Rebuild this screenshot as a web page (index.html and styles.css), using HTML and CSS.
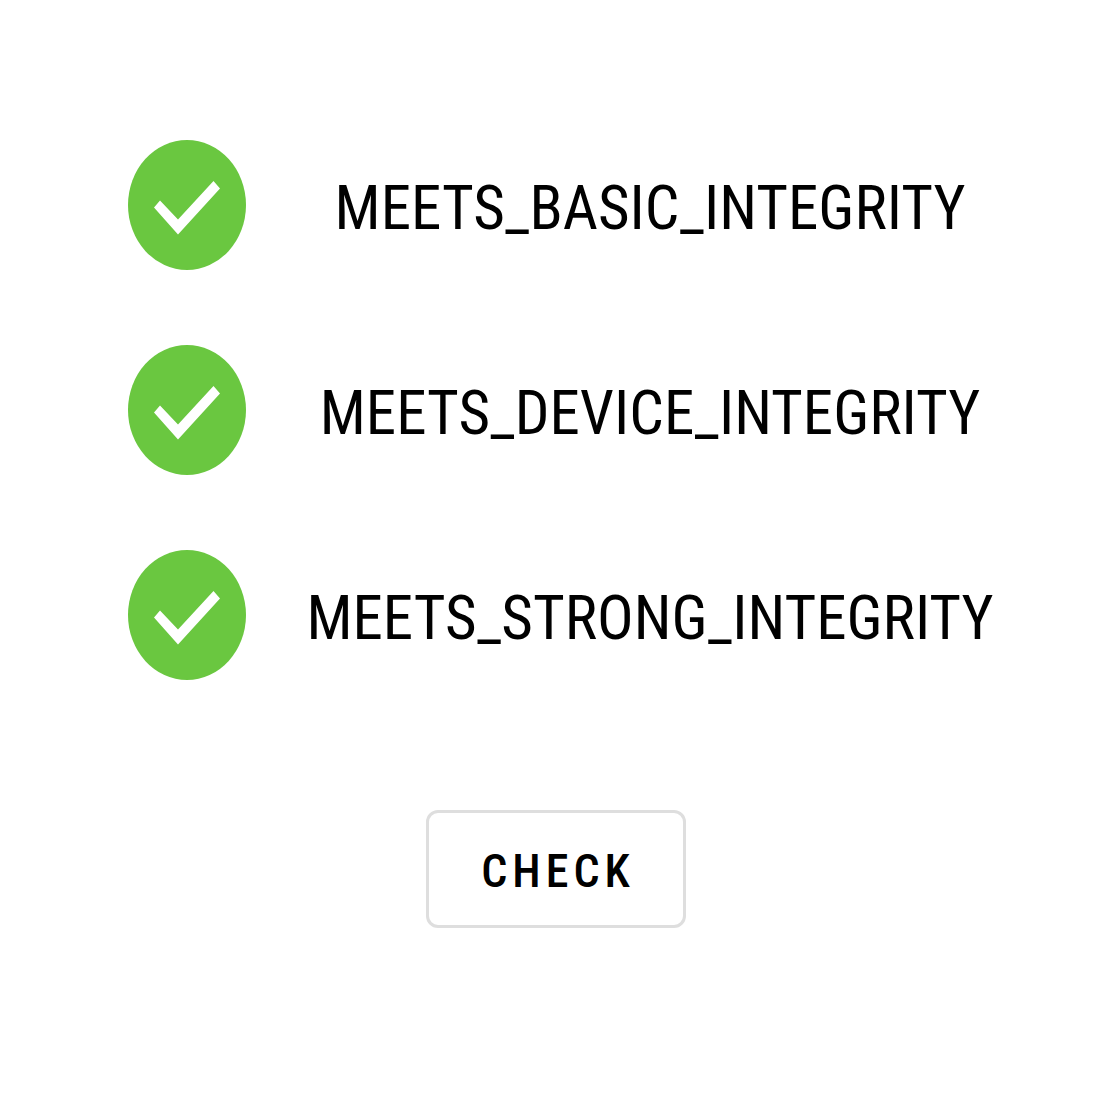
FILE: index.html
```html
<!DOCTYPE html>
<html lang="en">
<head>
<meta charset="utf-8">
<meta name="viewport" content="width=device-width, initial-scale=1">
<title>Integrity check</title>
<link rel="stylesheet" href="styles.css">
</head>
<body>
<main class="page">
  <ul class="results">
    <li class="result">
      <svg class="result-icon" viewBox="0 0 118 130" aria-hidden="true"><ellipse cx="59" cy="65" rx="59" ry="65" fill="#6ac740"/><path d="M32 60.5L50 79.5 85.500 41 92 48.500 50 94.500 26 67.500Z" fill="#fff"/></svg>
      <span class="result-label">MEETS_BASIC_INTEGRITY</span>
    </li>
    <li class="result">
      <svg class="result-icon" viewBox="0 0 118 130" aria-hidden="true"><ellipse cx="59" cy="65" rx="59" ry="65" fill="#6ac740"/><path d="M32 60.5L50 79.5 85.500 41 92 48.500 50 94.500 26 67.500Z" fill="#fff"/></svg>
      <span class="result-label">MEETS_DEVICE_INTEGRITY</span>
    </li>
    <li class="result">
      <svg class="result-icon" viewBox="0 0 118 130" aria-hidden="true"><ellipse cx="59" cy="65" rx="59" ry="65" fill="#6ac740"/><path d="M32 60.5L50 79.5 85.500 41 92 48.500 50 94.500 26 67.500Z" fill="#fff"/></svg>
      <span class="result-label">MEETS_STRONG_INTEGRITY</span>
    </li>
  </ul>
  <button class="check-button" type="button">CHECK</button>
</main>
</body>
</html>
```
FILE: styles.css
```css
* {
  box-sizing: border-box;
}

body {
  margin: 0;
  background: #fff;
  color: #000;
  font-family: "Roboto Condensed", Roboto, sans-serif;
}

.page {
  display: flex;
  flex-direction: column;
  align-items: center;
  gap: 130px;
  padding: 140px 0 184px;
}

.results {
  display: grid;
  gap: 75px;
  width: 100%;
  margin: 0;
  padding: 0 112px 0 128px;
  list-style: none;
}

.result {
  display: flex;
  align-items: center;
  gap: 54px;
}

.result-icon {
  flex: none;
  width: 118px;
  height: 130px;
}

.result-label {
  flex: 1;
  padding-top: 6px;
  font-size: 61px;
  line-height: 72px;
  text-align: center;
  white-space: nowrap;
}

.check-button {
  min-width: 260px;
  height: 118px;
  padding: 4px 48px 0 52px;
  border: 3px solid #dedede;
  border-radius: 12px;
  background: #fff;
  color: #000;
  font-family: inherit;
  font-size: 46px;
  font-weight: 500;
  letter-spacing: 5px;
}
```
